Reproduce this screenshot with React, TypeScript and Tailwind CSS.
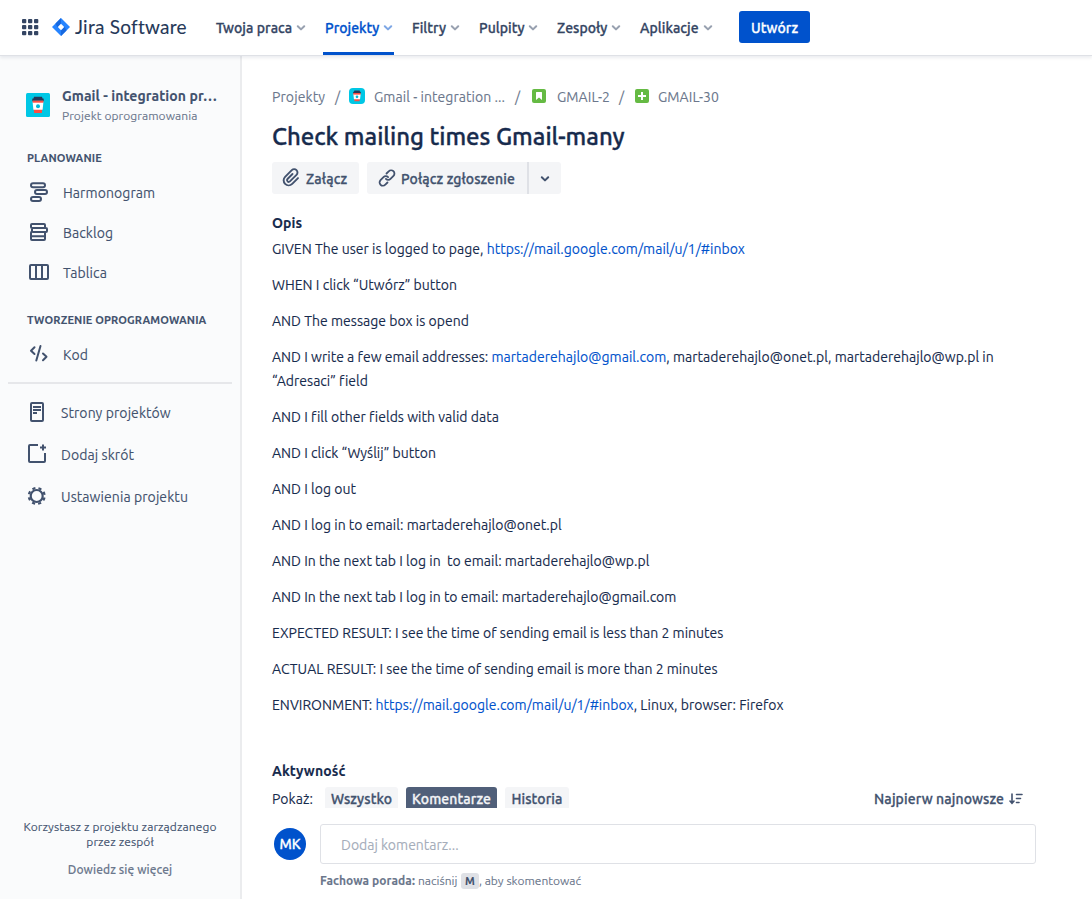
import type { ReactNode } from 'react';

const Chevron = ({ className = '' }: { className?: string }) => (
  <svg className={`shrink-0 ${className}`} width="10" height="8" viewBox="0 0 10 8" fill="none" stroke="currentColor" strokeWidth="2" strokeLinecap="round" strokeLinejoin="round">
    <path d="M1.8 2.2 5 5.4l3.2-3.2" />
  </svg>
);

const Cup = ({ className }: { className: string }) => (
  <svg className={`shrink-0 ${className}`} viewBox="0 0 24 24">
    <rect width="24" height="24" rx="1.5" fill="#00c7e5" />
    <path d="M6.800 8h10.400L15.800 20H8.200z" fill="#ff4e43" />
    <path d="M6.600 9.200h10.800l-.8 7.600H7.400z" fill="#fff" />
    <path d="M6 7.800 6.500 5.500h1L8 3.800h8l.5 1.700h1l.5 2.300z" fill="#253858" />
    <path d="M6.600 7.600h10.800v2H6.600z" fill="#ff4e43" />
    <circle cx="12" cy="13.200" r="2" fill="#00b8d9" />
  </svg>
);

const Icon = ({ children }: { children: ReactNode }) => (
  <svg className="shrink-0" width="24" height="24" viewBox="0 0 24 24" fill="none" stroke="currentColor" strokeWidth="2">
    {children}
  </svg>
);

const NavItem = ({ label, box, active }: { label: string; box: string; active?: boolean }) => (
  <div className={`flex h-full shrink-0 items-center justify-between pt-px ${box} ${active ? 'text-[#0052cc]' : 'text-[#344563]'}`}>
    <span>{label}</span>
    <Chevron className="opacity-50" />
  </div>
);

const SideItem = ({ icon, label, className }: { icon: ReactNode; label: string; className: string }) => (
  <div className={`flex items-center gap-3 tracking-[0.08px] ${className}`}>
    <Icon>{icon}</Icon>
    <span className="pt-0.5">{label}</span>
  </div>
);

const A = ({ children }: { children: ReactNode }) => <span className="text-[#0052cc]">{children}</span>;

export default function App() {
  return (
    <div className="flex h-[899px] w-[1092px] flex-col overflow-hidden bg-white font-['Ubuntu','Noto_Sans',sans-serif] text-[14px] text-[#172b4d] [-webkit-text-stroke:0.1px]">
      <header className="z-10 flex h-[56px] shrink-0 items-center border-b border-[#dfe1e6] bg-white pl-[22px] font-medium tracking-[0.06px] shadow-[0_2px_3px_rgba(9,30,66,0.08)] [-webkit-text-stroke:0.3px]">
        <svg width="17" height="17" viewBox="0 0 17 17" fill="#344563" className="shrink-0">
          {[0, 6, 12].map((y) => [0, 6, 12].map((x) => <rect key={`${x}-${y}`} x={x} y={y} width="4.300" height="4.300" rx="1" />))}
        </svg>
        <svg width="18" height="18" viewBox="0 0 18 18" className="-mt-px ml-[13px] shrink-0">
          <path d="M9 0 18 9l-9 9-9-9z" fill="#2684ff" />
          <path d="M9 0v6L5.500 9.400 3.500 5.500z" fill="#1769e0" />
          <path d="M9 18v-6l3.500-3.400 2 3.900z" fill="#1769e0" />
          <path d="m9 5.800 3.200 3.200L9 12.200 5.800 9z" fill="#fff" />
        </svg>
        <div className="-mt-px ml-[5px] w-[141px] shrink-0 whitespace-nowrap font-['Lato',sans-serif] text-[19px] font-normal tracking-[0.25px] text-[#253858] [-webkit-text-stroke:0.1px]">Jira Software</div>
        <nav className="flex h-full shrink-0 whitespace-nowrap">
          <NavItem label="Twoja praca" box="w-[90px]" />
          <div className="relative ml-[17px] h-full w-[71px] pl-[2px]">
            <NavItem label="Projekty" box="w-[68px]" active />
            <span className="absolute bottom-0 left-0 h-[3px] w-[71px] bg-[#0052cc]" />
          </div>
          <NavItem label="Filtry" box="ml-[18px] w-[48px]" />
          <NavItem label="Pulpity" box="ml-[19px] w-[59px]" />
          <NavItem label="Zespoły" box="ml-[19px] w-[64px]" />
          <NavItem label="Aplikacje" box="ml-[19px] w-[73px]" />
        </nav>
        <button className="-mt-[2px] ml-[26px] h-8 w-[71px] shrink-0 rounded-[3px] bg-[#0052cc] pt-[3px] text-white">Utwórz</button>
      </header>

      <div className="flex min-h-0 flex-1">
        <aside className="flex w-[242px] shrink-0 flex-col border-r-2 border-[#ebecee] bg-[#fafbfc] text-[#42526e]">
          <div className="ml-[26px] mt-[29px] flex whitespace-nowrap">
            <Cup className="mt-2 h-6 w-6" />
            <div className="ml-3 flex flex-col">
              <span className="h-[22px] font-bold leading-[22px] tracking-[0.07px]">Gmail - integration pr…</span>
              <span className="h-[18px] text-[12px] leading-[17px] tracking-[0.08px] text-[#6b778c]">Projekt oprogramowania</span>
            </div>
          </div>
          <h3 className="ml-[27px] mt-[25px] text-[11px] font-bold leading-4 tracking-[0.12px]">PLANOWANIE</h3>
          <SideItem className="ml-[27px] mt-[6px] h-10" label="Harmonogram" icon={<><rect x="4" y="3.300" width="14" height="4" rx="2" /><rect x="8" y="10" width="12" height="4" rx="2" /><rect x="4" y="17" width="10" height="4" rx="2" /></>} />
          <SideItem className="ml-[27px] h-10" label="Backlog" icon={<><path d="M18 8V5a1 1 0 0 0-1-1H5a1 1 0 0 0-1 1v2q0 1 1 1h14q1 0 1 1v2q0 1-1 1H6q-1 0-1-1V8" /><path d="M5 11.500q-1 .5-1 1.500v6q0 1 1 1h12q1 0 1-1v-7M4 16.200h14" /></>} />
          <SideItem className="ml-[27px] h-10" label="Tablica" icon={<path d="M4 5h16q1 0 1 1v12q0 1-1 1H4q-1 0-1-1V6q0-1 1-1zM9 5v14M15 5v14" />} />
          <h3 className="ml-[27px] mt-[20px] text-[11px] font-bold leading-4 tracking-[0.12px]">TWORZENIE OPROGRAMOWANIA</h3>
          <SideItem className="ml-[27px] mt-[6px] h-10" label="Kod" icon={<path d="M7.500 5.300 4 8.700l3.500 3.300M13.500 4l-4.200 14.500M16 11.500l3.500 3.300L16 18.200" strokeLinecap="round" strokeLinejoin="round" />} />
          <div className="ml-2 mt-[8px] h-[2px] w-[224px] shrink-0 bg-[#e6e7ea]" />
          <SideItem className="ml-[25px] mt-[7px] h-[42px]" label="Strony projektów" icon={<><rect x="6" y="3" width="12" height="18" rx="1" /><path d="M8 7h8M8 10h8M8 13h4" strokeWidth="1.800" /></>} />
          <SideItem className="ml-[25px] h-[42px]" label="Dodaj skrót" icon={<path d="M13 3H5q-1 0-1 1v15q0 1 1 1h14q1 0 1-1v-8M18 2.500v6M15 5.500h6" />} />
          <SideItem className="ml-[25px] h-[42px]" label="Ustawienia projektu" icon={<><circle cx="11.700" cy="12" r="6" strokeWidth="2.200" /><circle cx="11.700" cy="12" r="7.900" strokeWidth="2.200" strokeDasharray="3.100 3.104" strokeDashoffset="-1.550" /></>} />
          <div className="mt-auto pb-[22px] text-center text-[12px] leading-[15px] tracking-[0.08px]">
            <p>Korzystasz z projektu zarządzanego<br />przez zespół</p>
            <p className="mt-[13px] font-medium text-[#6b778c]">Dowiedz się więcej</p>
          </div>
        </aside>

        <main className="flex min-w-0 flex-1 flex-col whitespace-nowrap pl-[30px] pt-[29px]">
          <div className="flex h-6 shrink-0 items-center text-[#6b778c]">
            <span className="w-[63px] tracking-[0.1px]">Projekty</span>
            <span className="w-[14px]">/</span>
            <Cup className="-mt-[2px] h-4 w-4 rounded-sm" />
            <span className="ml-[9px] w-[141px] tracking-[0.05px]">Gmail - integration ...</span>
            <span className="w-[17px]">/</span>
            <svg className="-mt-[2px]" width="14" height="14" viewBox="0 0 14 14"><rect width="14" height="14" rx="2" fill="#65ba43" /><path d="M4 3.500q0-.5.5-.5h5q.5 0 .5.5V11L7 8.500 4 11z" fill="#fff" /></svg>
            <span className="ml-[11px] w-[62px] tracking-[0.08px]">GMAIL-2</span>
            <span className="w-[16px]">/</span>
            <svg className="-mt-[2px]" width="14" height="14" viewBox="0 0 14 14"><rect width="14" height="14" rx="2" fill="#65ba43" /><path d="M7 3v8M3 7h8" stroke="#fff" strokeWidth="2" /></svg>
            <span className="ml-[9px] tracking-[0.08px]">GMAIL-30</span>
          </div>
          <h1 className="mt-[14px] shrink-0 text-[24px] font-medium leading-7 tracking-[-0.03px] [-webkit-text-stroke:0.35px]">Check mailing times Gmail-many</h1>
          <div className="mt-[11px] flex h-8 shrink-0 font-medium tracking-[0.11px] text-[#42526e] [-webkit-text-stroke:0.3px]">
            <div className="flex w-[87px] items-center rounded-[3px] bg-[#f4f5f7] pl-[7px]">
              <Icon><path d="m13.500 8-5 5a1.700 1.700 0 0 0 2.400 2.400l6.600-6.600a3.300 3.300 0 0 0-4.700-4.700l-6.700 6.700a5 5 0 0 0 7.100 7.100l5.800-5.800" strokeWidth="1.900" strokeLinecap="round" /></Icon>
              <span className="ml-[3px] pt-0.5">Załącz</span>
            </div>
            <div className="ml-2 flex w-[160px] items-center rounded-l-[3px] bg-[#f4f5f7] pl-[8px]">
              <Icon><path d="M11.500 7.500 13.700 5.300a3.200 3.200 0 0 1 4.800 4.600l-3 3a3.200 3.200 0 0 1-4.600 0M12.500 16.500l-2.200 2.200a3.200 3.200 0 0 1-4.800-4.600l3-3a3.200 3.200 0 0 1 4.600 0" strokeWidth="1.800" strokeLinecap="round" /></Icon>
              <span className="ml-[2px] pt-0.5">Połącz zgłoszenie</span>
            </div>
            <div className="flex w-[34px] items-center justify-center rounded-r-[3px] border-l-2 border-[#dfe1e6] bg-[#f4f5f7] pt-px"><Chevron /></div>
          </div>
          <h2 className="mt-[19px] text-[14px] font-bold leading-5 tracking-[0.1px]">Opis</h2>
          <div className="mt-1 flex flex-col gap-3 leading-6 tracking-[0.014px]">
            <p>GIVEN The user is logged to page, <A>https://mail.google.com/mail/u/1/#inbox</A></p>
            <p>WHEN I click “Utwórz” button</p>
            <p>AND The message box is opend</p>
            <p>AND I write a few email addresses: <A>martaderehajlo@gmail.com</A>, martaderehajlo@onet.pl, martaderehajlo@wp.pl in<br />“Adresaci” field</p>
            <p>AND I fill other fields with valid data</p>
            <p>AND I click “Wyślij” button</p>
            <p>AND I log out</p>
            <p>AND I log in to email: martaderehajlo@onet.pl</p>
            <p>AND In the next tab I log in &nbsp;to email: martaderehajlo@wp.pl</p>
            <p>AND In the next tab I log in to email: martaderehajlo@gmail.com</p>
            <p>EXPECTED RESULT: I see the time of sending email is less than 2 minutes</p>
            <p>ACTUAL RESULT: I see the time of sending email is more than 2 minutes</p>
            <p>ENVIRONMENT: <A>https://mail.google.com/mail/u/1/#inbox</A>, Linux, browser: Firefox</p>
          </div>
          <h2 className="mt-[44px] text-[14px] font-bold leading-5 tracking-[0.1px]">Aktywność</h2>
          <div className="mt-[6px] flex h-[21px] shrink-0 leading-6">
            <span className="w-[53px] tracking-[0.1px]">Pokaż:</span>
            <div className="flex gap-2 text-center font-medium tracking-[0.11px] text-[#42526e] [-webkit-text-stroke:0.3px]">
              <span className="w-[73px] overflow-hidden rounded-t-[3px] bg-[#f4f5f7]">Wszystko</span>
              <span className="w-[91px] overflow-hidden rounded-t-[3px] bg-[#505f79] text-[#f4f5f7]">Komentarze</span>
              <span className="w-[64px] overflow-hidden rounded-t-[3px] bg-[#f4f5f7]">Historia</span>
            </div>
            <span className="ml-[305px] w-[135px] font-medium tracking-[0.11px] text-[#42526e] [-webkit-text-stroke:0.3px]">Najpierw najnowsze</span>
            <svg className="mt-[6px]" width="14" height="12" viewBox="0 0 14 12" fill="none" stroke="#42526e" strokeWidth="1.600" strokeLinecap="round"><path d="M3 1v9M1 8l2 2.300L5 8" /><path d="M7.500 1.500H13M7.500 5.500h4M7.500 9.500h2.500" /></svg>
          </div>
          <div className="mt-4 flex h-10 shrink-0 items-center pl-[2px]">
            <div className="flex h-8 w-8 items-center justify-center rounded-full bg-[#0052cc] font-medium text-white [-webkit-text-stroke:0.3px]">MK</div>
            <div className="ml-[14px] flex h-10 w-[716px] items-center rounded-[3px] border border-[#dfe1e6] pl-5 pt-0.5 text-[#a5adba]">Dodaj komentarz...</div>
          </div>
          <div className="ml-12 mt-[9px] flex h-4 items-center text-[12px] leading-4 text-[#6b778c]">
            <b className="w-[98px] tracking-[0.06px]">Fachowa porada:</b>
            <span className="w-[43px]">naciśnij</span>
            <span className="h-4 w-[18px] rounded-[3px] bg-[#dfe1e6] text-center text-[11px] font-bold text-[#42526e]">M</span>
            <span>, aby skomentować</span>
          </div>
        </main>
      </div>
    </div>
  );
}
